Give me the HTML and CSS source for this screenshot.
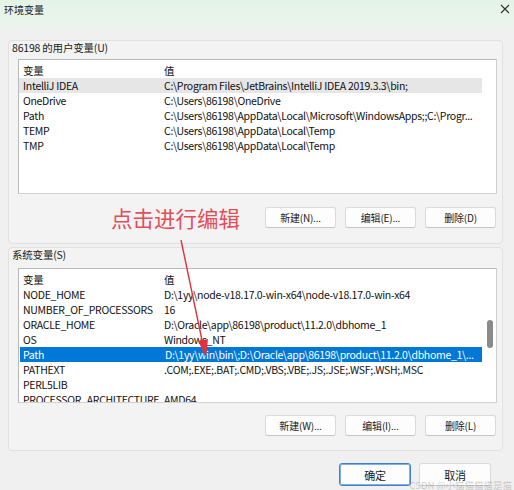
FILE: index.html
```html
<!DOCTYPE html>
<html lang="zh-CN">
<head>
<meta charset="utf-8">
<title>环境变量</title>
<link rel="stylesheet" href="styles.css">
</head>
<body>
<div class="window">
  <div class="titlebar">
    <span class="title">环境变量</span>
    <svg class="close" width="10" height="10" viewBox="0 0 10 10"><path d="M1 1L9 9M9 1L1 9" stroke="#333" stroke-width="1.1" fill="none"/></svg>
  </div>
  <div class="content">
    <div class="group">
      <div class="label">86198 的用户变量(U)</div>
      <div class="listbox">
        <div class="row head"><span class="k">变量</span><span class="v">值</span></div>
        <div class="row soft"><span class="k">IntelliJ IDEA</span><span class="v">C:\Program Files\JetBrains\IntelliJ IDEA 2019.3.3\bin;</span></div>
        <div class="row"><span class="k">OneDrive</span><span class="v">C:\Users\86198\OneDrive</span></div>
        <div class="row"><span class="k">Path</span><span class="v">C:\Users\86198\AppData\Local\Microsoft\WindowsApps;;C:\Progr...</span></div>
        <div class="row"><span class="k">TEMP</span><span class="v">C:\Users\86198\AppData\Local\Temp</span></div>
        <div class="row"><span class="k">TMP</span><span class="v">C:\Users\86198\AppData\Local\Temp</span></div>
      </div>
      <div class="buttons">
        <span class="note">点击进行编辑</span>
        <button class="btn">新建(N)...</button>
        <button class="btn">编辑(E)...</button>
        <button class="btn">删除(D)</button>
      </div>
    </div>
    <div class="group group2">
      <div class="label label2">系统变量(S)</div>
      <div class="listbox">
        <div class="row head"><span class="k">变量</span><span class="v">值</span></div>
        <div class="row"><span class="k">NODE_HOME</span><span class="v">D:\1yy\node-v18.17.0-win-x64\node-v18.17.0-win-x64</span></div>
        <div class="row"><span class="k">NUMBER_OF_PROCESSORS</span><span class="v">16</span></div>
        <div class="row"><span class="k">ORACLE_HOME</span><span class="v">D:\Oracle\app\86198\product\11.2.0\dbhome_1</span></div>
        <div class="row"><span class="k">OS</span><span class="v">Windows_NT</span></div>
        <div class="row sel"><span class="k">Path</span><span class="v">D:\1yy\win\bin\;D:\Oracle\app\86198\product\11.2.0\dbhome_1\...</span></div>
        <div class="row"><span class="k">PATHEXT</span><span class="v">.COM;.EXE;.BAT;.CMD;.VBS;.VBE;.JS;.JSE;.WSF;.WSH;.MSC</span></div>
        <div class="row"><span class="k">PERL5LIB</span><span class="v"></span></div>
        <div class="row"><span class="k">PROCESSOR_ARCHITECTURE</span><span class="v">AMD64</span></div>
        <div class="thumb"></div>
      </div>
      <div class="buttons">
        <button class="btn">新建(W)...</button>
        <button class="btn">编辑(I)...</button>
        <button class="btn">删除(L)</button>
      </div>
    </div>
    <div class="footer">
      <button class="btn wide primary">确定</button>
      <button class="btn wide">取消</button>
    </div>
  </div>
  <svg class="arrow" width="514" height="490" viewBox="0 0 514 490">
    <path d="M181 240 L203 345" stroke="#e0323c" stroke-width="1.4" fill="none"/>
    <path d="M206 357 L198 341 L208 339 Z" fill="#e0323c"/>
  </svg>
  <div class="watermark">CSDN @小猫猫猫猫是猫</div>
</div>
</body>
</html>
```
FILE: styles.css
```css
* { box-sizing: border-box; }
html, body { margin: 0; padding: 0; }
body {
  width: 514px;
  height: 490px;
  overflow: hidden;
  background: #f0f0f0;
  font-family: "Noto Sans CJK SC", "Noto Sans", sans-serif;
  font-size: 11px;
  color: #1a1a1a;
}
.window {
  position: relative;
  width: 514px;
  height: 490px;
  background: linear-gradient(180deg, #e3f3e6 0px, #eaf4ec 20px, #f0f0f0 34px);
}
.titlebar {
  height: 22px;
  display: flex;
  align-items: center;
  justify-content: space-between;
  padding: 0 4px 4px 4px;
}
.title { font-size: 10px; color: #222; }
.content {
  padding: 18px 11px 0 8px;
}
.group {
  background: #f3f3f3;
  border: 1px solid #e1e1e1;
  border-radius: 4px;
  padding: 0 5px 15px 9px;
}
.group2 { margin-top: 3px; padding-bottom: 14px; }
.label {
  height: 18px;
  line-height: 13px;
  margin-left: -6px;
  font-size: 10.5px;
  letter-spacing: -0.2px;
}
.label2 { height: 20px; line-height: 14px; }
.listbox {
  position: relative;
  height: 135px;
  background: #fff;
  border: 1px solid #b9b9b9;
  border-right-color: #d0d0d0;
  border-bottom-color: #d0d0d0;
  padding-top: 3px;
  overflow: hidden;
}
.row {
  display: flex;
  height: 15px;
  line-height: 15px;
  margin-right: 14px;
  white-space: nowrap;
  color: #111;
  font-size: 10.5px;
  letter-spacing: -0.3px;
}
.row .k { width: 145px; padding-left: 4px; flex: none; overflow: hidden; }
.row .v { flex: 1; overflow: hidden; }
.row.soft { background: #e6e6e6; }
.row.sel { background: #0078d7; color: #fff; margin-left: 1px; }
.row.sel .k { padding-left: 3px; }
.thumb {
  position: absolute;
  left: 468px;
  top: 51px;
  width: 6px;
  height: 28px;
  border-radius: 3px;
  background: #8a8a8a;
}
.buttons {
  display: flex;
  justify-content: flex-end;
  align-items: center;
  gap: 9px;
  margin-top: 13px;
  padding-right: 1px;
}
.group2 .buttons { margin-top: 12px; }
.note {
  font-size: 21.5px;
  line-height: 21px;
  color: #e24e59;
  margin-right: 16px;
}
.btn {
  width: 71px;
  height: 21px;
  padding: 0;
  background: #fdfdfd;
  border: 1px solid #dadada;
  border-bottom-color: #c6c6c6;
  border-radius: 3px;
  font-family: "Noto Sans CJK SC", "Noto Sans", sans-serif;
  font-size: 10px;
  letter-spacing: -0.2px;
  color: #1a1a1a;
}
.footer {
  display: flex;
  justify-content: flex-end;
  gap: 8px;
  margin-top: 12px;
  padding-right: 12px;
}
.btn.wide { width: 72px; height: 23px; font-size: 11px; }
.btn.primary { border: 1px solid #3d7fd0; box-shadow: inset 0 0 0 1px #7fb0e8; background: #fbfdff; }
.arrow {
  position: absolute;
  left: 0;
  top: 0;
  pointer-events: none;
}
.watermark {
  position: absolute;
  right: 2px;
  bottom: -2px;
  font-size: 9.5px;
  color: rgba(120,120,120,0.35);
  white-space: nowrap;
}
```
